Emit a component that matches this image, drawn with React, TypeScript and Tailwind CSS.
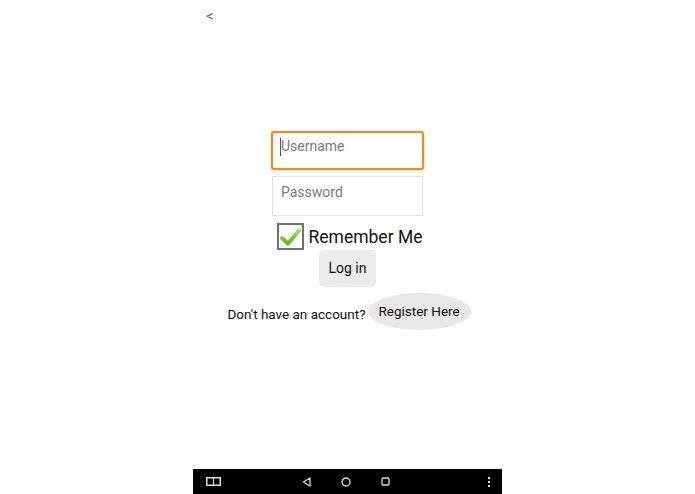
export default function App() {
  return (
    <div className="flex h-[494px] w-full justify-center bg-white font-['Roboto',sans-serif]">
      <div className="flex h-full w-[309px] flex-col">
        <div className="flex flex-1 flex-col">
          <div className="h-[28px] pl-[13px] pt-[6px] text-[15px] leading-[20px] text-[#666]">&lt;</div>
          <div className="flex flex-col items-center pt-[103px]">
            <div className="relative h-[39px] w-[153px] rounded-[3px] border-2 border-[#ee8a1e] shadow-[0_0_2px_#f3b06a] pl-[8px] pt-[4px] text-[14px] leading-[18px] text-[#7a7a7a]">
              <span className="absolute left-[7px] top-[5px] h-[18px] w-px bg-[#555]" />
              Username
            </div>
            <div className="mt-[6px] h-[40px] w-[151px] border border-[#e2e2e2] pl-[8px] pt-[6px] text-[14px] leading-[18px] text-[#7a7a7a]">
              Password
            </div>
            <div className="mt-[7px] flex h-[27px] items-center gap-[5px] pl-[4px]">
              <div className="flex h-[27px] w-[27px] items-center justify-center border-2 border-[#6e6e6e]">
                <svg width="21" height="18" viewBox="0 0 21 18">
                  <defs>
                    <linearGradient id="ck" x1="0" y1="0" x2="0" y2="1">
                      <stop offset="0" stopColor="#9be05a" />
                      <stop offset="1" stopColor="#62b32e" />
                    </linearGradient>
                  </defs>
                  <path d="M2 10 L8 15.5 L19 2.5" fill="none" stroke="url(#ck)" strokeWidth="4" strokeLinecap="round" strokeLinejoin="round" />
                </svg>
              </div>
              <span className="translate-y-[1px] text-[17.5px] leading-[27px] text-[#111]">Remember Me</span>
            </div>
            <button className="h-[37px] w-[57px] rounded-[5px] bg-[#ececec] text-[14px] text-[#111]">Log in</button>
            <div className="mt-[6px] flex h-[37px] items-center gap-[2px] pl-[3px]">
              <span className="translate-y-[3px] text-[13.5px] text-[#111]">Don't have an account?</span>
              <span className="flex h-[37px] w-[103px] items-center justify-center rounded-[50%] bg-[#e8e8e8] pb-[1px] text-[13.5px] text-[#111]">Register Here</span>
            </div>
          </div>
        </div>
        <div className="flex h-[25px] items-center bg-black text-white">
          <div className="flex w-[40px] justify-center">
            <svg width="15" height="9" viewBox="0 0 15 9">
              <rect x="0.75" y="0.75" width="13.5" height="7.5" fill="none" stroke="#ddd" strokeWidth="1.5" />
              <line x1="7.5" y1="1" x2="7.5" y2="8" stroke="#ddd" strokeWidth="1.2" />
            </svg>
          </div>
          <div className="ml-[69px] flex items-center gap-[30px]">
            <svg width="9" height="10" viewBox="0 0 9 10">
              <path d="M8 1 L1.5 5 L8 9 Z" fill="none" stroke="#ddd" strokeWidth="1.3" strokeLinejoin="round" />
            </svg>
            <svg width="10" height="10" viewBox="0 0 10 10">
              <circle cx="5" cy="5" r="4" fill="none" stroke="#ddd" strokeWidth="1.3" />
            </svg>
            <svg width="9" height="9" viewBox="0 0 9 9">
              <rect x="1" y="1" width="7" height="7" rx="1" fill="none" stroke="#ddd" strokeWidth="1.3" />
            </svg>
          </div>
          <div className="ml-auto mr-[12px] flex flex-col gap-[2px]">
            <span className="h-[2px] w-[2px] bg-[#ddd]" />
            <span className="h-[2px] w-[2px] bg-[#ddd]" />
            <span className="h-[2px] w-[2px] bg-[#ddd]" />
          </div>
        </div>
      </div>
    </div>
  )
}
